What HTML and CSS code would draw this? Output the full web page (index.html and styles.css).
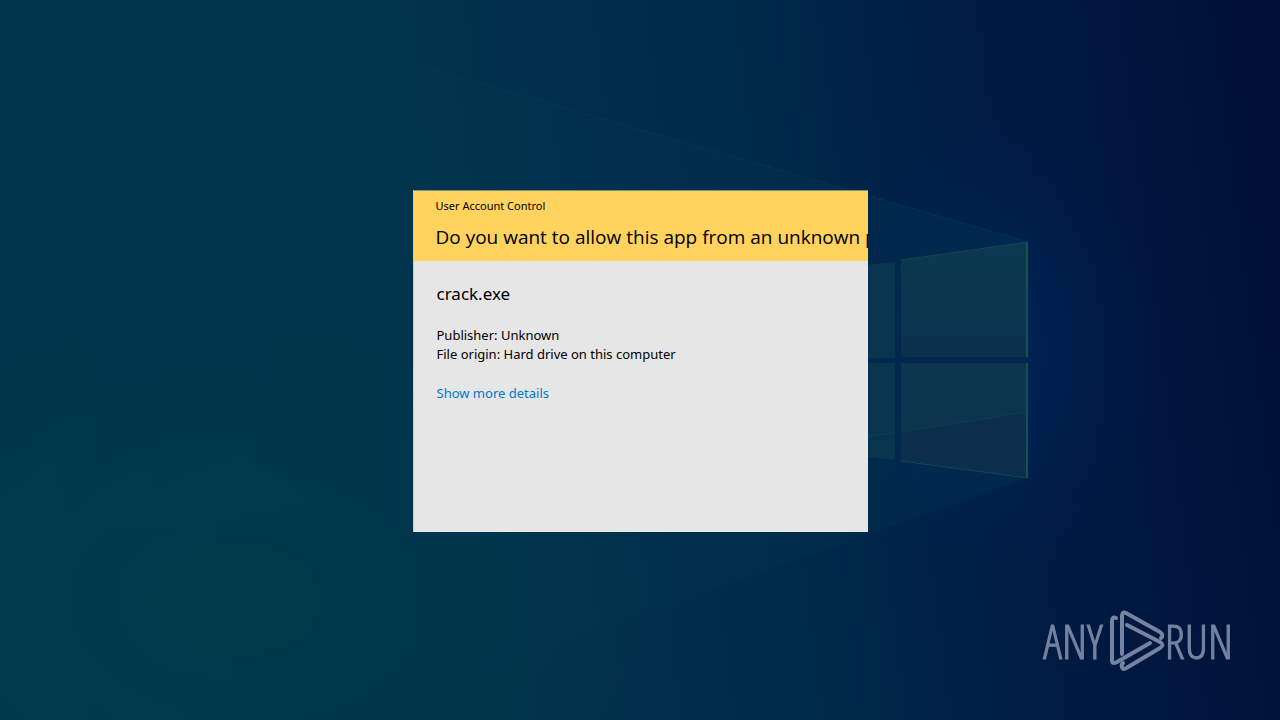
FILE: index.html
```
<!DOCTYPE html>
<html lang="en">
<head>
  <meta charset="UTF-8">
  <meta name="viewport" content="width=device-width, initial-scale=1.0">
  <title>User Account Control</title>
  <link rel="stylesheet" href="styles.css">
</head>
<body>
  <svg class="wallpaper" viewBox="0 0 1280 720" preserveAspectRatio="xMidYMid slice" aria-hidden="true">
    <defs>
      <linearGradient id="sky" x1="0" y1="0.55" x2="1" y2="0.48">
        <stop offset="0" stop-color="#00364d"/>
        <stop offset="0.35" stop-color="#00334c"/>
        <stop offset="0.6" stop-color="#002a4a"/>
        <stop offset="0.82" stop-color="#001a42"/>
        <stop offset="1" stop-color="#001038"/>
      </linearGradient>
      <radialGradient id="glow">
        <stop offset="0" stop-color="#002c5c" stop-opacity="0.6"/>
        <stop offset="0.5" stop-color="#00265a" stop-opacity="0.45"/>
        <stop offset="1" stop-color="#001f50" stop-opacity="0"/>
      </radialGradient>
      <radialGradient id="floor">
        <stop offset="0" stop-color="#003c4a" stop-opacity="0.7"/>
        <stop offset="1" stop-color="#003c4a" stop-opacity="0"/>
      </radialGradient>
      <linearGradient id="beam" x1="0" y1="0" x2="1" y2="0">
        <stop offset="0" stop-color="#003a4e" stop-opacity="0"/>
        <stop offset="1" stop-color="#003450" stop-opacity="0.35"/>
      </linearGradient>
      <linearGradient id="pane" x1="0" y1="1" x2="0" y2="0">
        <stop offset="0" stop-color="#0b304e"/>
        <stop offset="1" stop-color="#0b394e"/>
      </linearGradient>
    </defs>
    <rect width="1280" height="720" fill="url(#sky)"/>
    <ellipse cx="240" cy="600" rx="460" ry="320" fill="url(#floor)"/>
    <ellipse cx="980" cy="350" rx="180" ry="240" fill="url(#glow)"/>
    <path d="M280 25L1028 242V478L400 700L0 560V200Z" fill="url(#beam)"/>
    <path d="M300 31L1028 242" stroke="#0b4160" stroke-opacity="0.4" fill="none"/>
    <path d="M60 530L240 455L310 500L420 485L200 522Z" fill="#003c50" opacity="0.3"/>
    <path d="M868 264L1028 242V478L868 457Z" fill="#00284c"/>
    <path d="M840 268L895 262V358H840Z" fill="#073550"/>
    <path d="M901 260L1028 242V357H901Z" fill="url(#pane)"/>
    <path d="M840 363H895V460L840 454Z" fill="#073550"/>
    <path d="M901 363H1028V478L901 461Z" fill="#0b344f"/>
    <path d="M901 432L1028 412V478L901 461Z" fill="#0a2e4c"/>
    <path d="M840 438L895 433M901 432L1028 412" stroke="#124a50" stroke-opacity="0.6" fill="none"/>
    <path d="M901 260L1028 242M901 461L1028 478" stroke="#124657" fill="none"/>
    <path d="M1027 243V357M1027 363V478" stroke="#184f52" stroke-width="2" fill="none"/>
  </svg>

  <main class="screen">
    <section class="uac" role="dialog" aria-labelledby="question">
      <header class="uac-header">
        <p class="caption">User Account Control</p>
        <h1 id="question">Do you want to allow this app from an unknown p</h1>
      </header>
      <div class="uac-body">
        <h2>crack.exe</h2>
        <p>Publisher: Unknown</p>
        <p>File origin: Hard drive on this computer</p>
        <a href="#" class="details">Show more details</a>
      </div>
    </section>
  </main>

  <div class="watermark">
    <span>ANY</span>
    <svg width="56" height="62" viewBox="0 0 56 62" fill="none" stroke="currentColor" stroke-width="4" stroke-linecap="round" stroke-linejoin="round" aria-hidden="true">
      <path d="M7 8Q3 6 3 11V50Q3 55 8 52L41 33"/>
      <path d="M13 44V6Q13 1 17 3L51 22Q55 25 52 28"/>
      <path d="M18 15L51 32Q56 35 51 38L19 57Q14 61 13 57Q12 55 14 53"/>
    </svg>
    <span>RUN</span>
  </div>
</body>
</html>
```
FILE: styles.css
```
* {
  box-sizing: border-box;
}
body {
  margin: 0;
  font-family: "Noto Sans", "Open Sans", sans-serif;
  color: #000;
  background-color: #002b4b;
}
.wallpaper {
  position: fixed;
  top: 0;
  left: 0;
  width: 100%;
  height: 100%;
}
.screen {
  position: relative;
  display: flex;
  justify-content: center;
  align-items: center;
  min-height: 100vh;
  padding-top: 2px;
}
.uac {
  width: 455px;
  min-height: 342px;
  overflow: hidden;
  background-color: #e6e6e6;
  border-left: 1px solid #b5d3e6;
}
.uac-header {
  padding: 7px 0 9px 22px;
  background-color: #ffd35e;
  border-top: 1px solid #6f8f80;
}
.uac p,
.uac h1,
.uac h2 {
  margin: 0;
  font-weight: normal;
  white-space: nowrap;
}
.uac .caption {
  font-size: 11px;
  line-height: 16px;
}
.uac h1 {
  margin-top: 8px;
  font-family: "Open Sans", "Noto Sans", sans-serif;
  font-size: 19px;
  line-height: 30px;
}
.uac-body {
  padding: 21px 23px;
  font-size: 13px;
  line-height: 19px;
}
.uac h2 {
  margin-bottom: 20px;
  font-size: 17px;
  line-height: 24px;
}
.details {
  display: inline-block;
  margin-top: 20px;
  color: #0078d0;
  text-decoration: none;
}
.details:hover {
  color: #666;
}
.watermark {
  position: fixed;
  right: 47px;
  bottom: 48px;
  display: flex;
  align-items: center;
  color: #7583a0;
  font-family: "Open Sans Condensed Light", "Open Sans Condensed", "Liberation Sans Narrow", sans-serif;
  font-size: 47px;
  font-weight: 300;
  line-height: 60px;
  -webkit-text-stroke: 1px currentColor;
}
.watermark svg {
  margin-left: 6px;
}
```
